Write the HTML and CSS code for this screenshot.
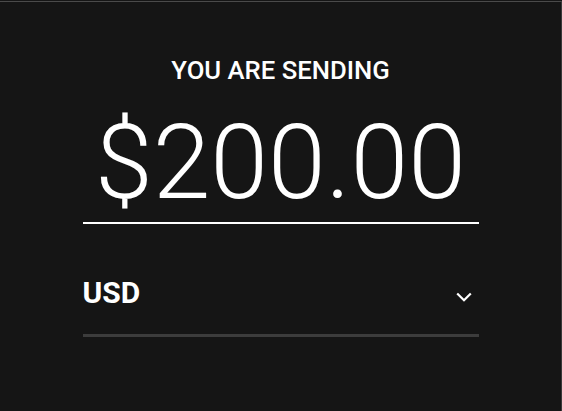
FILE: index.html
```html
<!DOCTYPE html>
<html>
<head>
<meta charset="utf-8">
<link rel="stylesheet" href="styles.css">
</head>
<body>
<div class="frame">
  <div class="panel">
    <div class="label">YOU ARE SENDING</div>
    <div class="amount">$200.00</div>
    <div class="currency">
      <span class="code">USD</span>
      <svg class="chev" width="16" height="11" viewBox="0 0 16 11"><path d="M1.2 1.5 L8 8.3 L14.8 1.5" fill="none" stroke="#fff" stroke-width="2.2"/></svg>
    </div>
  </div>
</div>
</body>
</html>
```
FILE: styles.css
```css
html, body {
  margin: 0;
  padding: 0;
  background: #151515;
  width: 562px;
  height: 411px;
  overflow: hidden;
}
.frame {
  box-sizing: border-box;
  width: 562px;
  height: 411px;
  border-top: 1px solid #4a4a4a;
  border-right: 1px solid #3a3a3a;
  margin-top: 1px;
  display: flex;
  justify-content: center;
  font-family: Roboto, "Liberation Sans", sans-serif;
  color: #fff;
}
.panel {
  width: 396px;
  display: flex;
  flex-direction: column;
  padding-top: 53px;
}
.label {
  text-align: center;
  font-size: 25.7px;
  font-weight: 500;
  line-height: 30px;
}
.amount {
  text-align: center;
  font-size: 104px;
  font-weight: 300;
  line-height: 108px;
  margin-top: 24px;
  border-bottom: 2px solid #fff;
  padding-bottom: 5px;
}
.currency {
  display: flex;
  justify-content: space-between;
  align-items: flex-start;
  margin-top: 52px;
  padding-bottom: 24px;
  border-bottom: 3px solid #3c3c3c;
}
.code {
  font-size: 30px;
  font-weight: 700;
  line-height: 34px;
}
.chev {
  margin-right: 7px;
  margin-top: 16px;
}
```
